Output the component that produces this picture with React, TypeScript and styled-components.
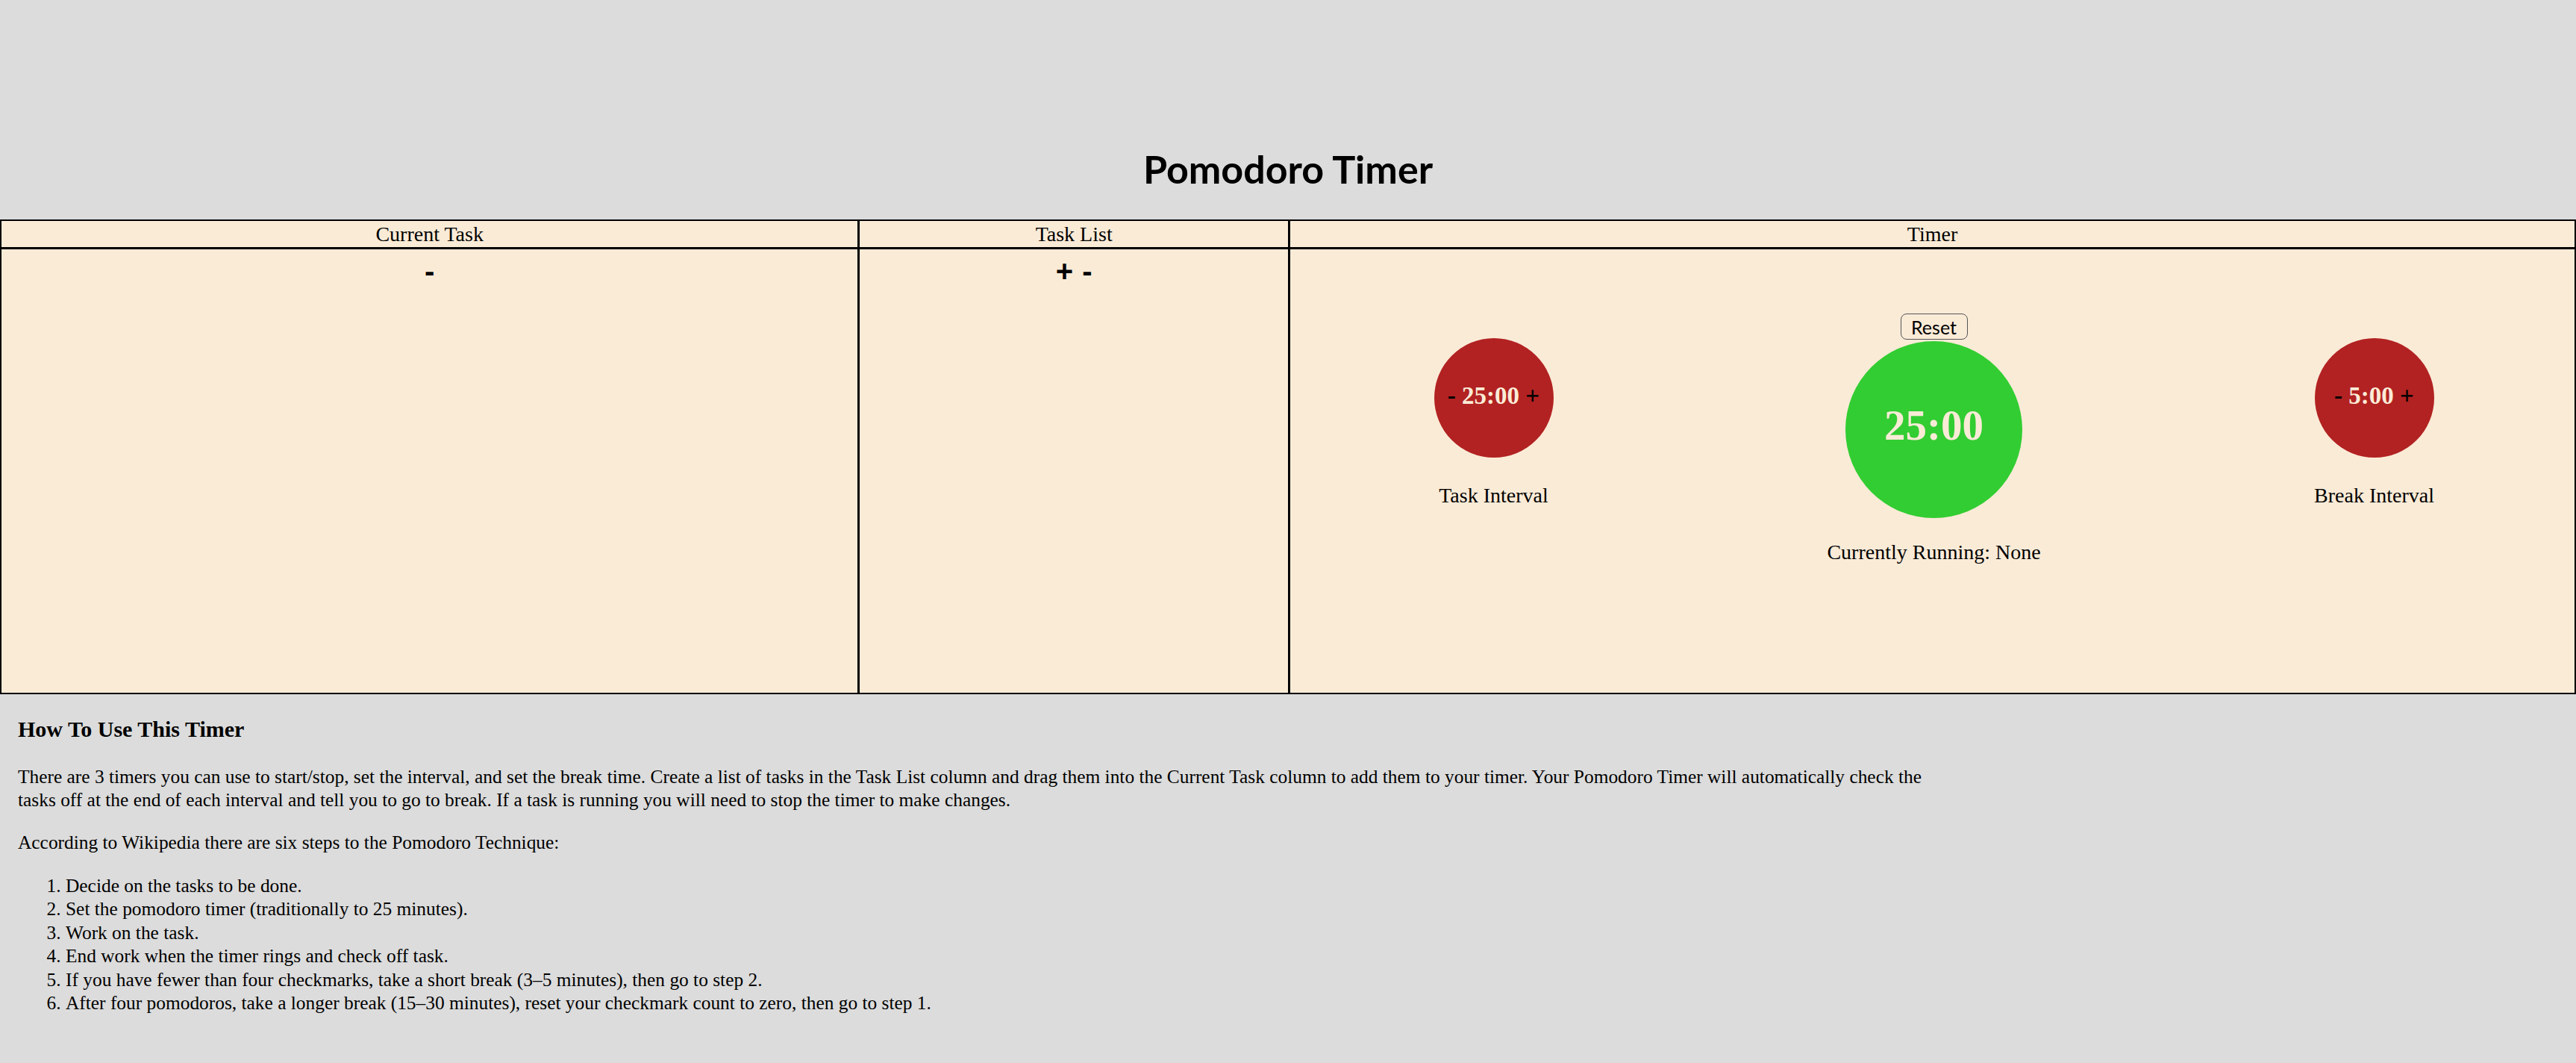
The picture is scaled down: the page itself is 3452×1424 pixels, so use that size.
import React from "react";
import styled, { createGlobalStyle } from "styled-components";

const GlobalStyle = createGlobalStyle`
  html, body {
    margin: 0;
    padding: 0;
    background: #dcdcdc;
    min-height: 100%;
  }
  body {
    font-family: "Liberation Serif", "Times New Roman", serif;
    color: #000;
  }
`;

const Page = styled.div`
  min-height: 1424px;
  background: #dcdcdc;
`;

const Header = styled.header`
  padding: 195px 0 37px;
  text-align: center;
`;

const Title = styled.h1`
  margin: 0;
  font-family: "Lato", "DejaVu Sans", sans-serif;
  font-weight: 700;
  font-size: 52px;
  line-height: 1.2;
  color: #000;
`;

const Board = styled.div`
  display: grid;
  grid-template-columns: 2fr 1fr 3fr;
  grid-template-rows: 35px 594px;
  column-gap: 3px;
  row-gap: 3px;
  background: #000;
  border: 2px solid #000;
`;

const HeadCell = styled.div`
  background: #faebd7;
  text-align: center;
  font-size: 28px;
  line-height: 35px;
`;

const BodyCell = styled.div`
  background: #faebd7;
  text-align: center;
`;

const Controls = styled.div`
  padding-top: 6px;
  font-family: "Liberation Sans", Arial, sans-serif;
  font-weight: 700;
  font-size: 40px;
  line-height: 46px;
  display: flex;
  justify-content: center;
  gap: 12px;
`;

const TimerRow = styled.div`
  display: flex;
  justify-content: center;
  align-items: flex-start;
  gap: 360px;
  padding-left: 4px;
`;

const TimerCol = styled.div<{ $offset: number; $width: number }>`
  width: ${(p) => p.$width}px;
  padding-top: ${(p) => p.$offset}px;
  display: flex;
  flex-direction: column;
  align-items: center;
  flex-shrink: 0;
`;

const Circle = styled.div<{ $size: number; $color: string }>`
  width: ${(p) => p.$size}px;
  height: ${(p) => p.$size}px;
  border-radius: 50%;
  background: ${(p) => p.$color};
  display: flex;
  align-items: center;
  justify-content: center;
  font-weight: 700;
  white-space: nowrap;
`;

const SmallClock = styled.div`
  font-size: 33px;
  padding-bottom: 5px;
`;

const BigClock = styled.div`
  font-size: 57px;
  color: #faebd7;
  padding-bottom: 12px;
`;

const Adjust = styled.span`
  color: #000;
`;

const Time = styled.span`
  color: #faebd7;
`;

const Label = styled.div<{ $gap: number }>`
  margin-top: ${(p) => p.$gap}px;
  font-size: 28px;
  line-height: 32px;
  white-space: nowrap;
`;

const ResetButton = styled.button`
  width: 90px;
  height: 35px;
  margin-bottom: 2px;
  padding: 0;
  font-family: "Lato", "DejaVu Sans", sans-serif;
  font-size: 25px;
  color: #000;
  background: transparent;
  border: 1.5px solid #555;
  border-radius: 8px;
`;

const Instructions = styled.section`
  max-width: 75%;
  padding: 0 0 40px 24px;
  font-size: 25.4px;
  line-height: 31.5px;
`;

const HowTitle = styled.h3`
  margin: 30px 0;
  font-size: 30px;
  line-height: 34.5px;
  font-weight: 700;
`;

const Para = styled.p`
  margin: 25.6px 0;
`;

const Steps = styled.ol`
  margin: 25.6px 0;
  padding-left: 64px;
`;

export default function App() {
  return (
    <>
      <GlobalStyle />
      <Page>
        <Header>
          <Title>Pomodoro Timer</Title>
        </Header>
        <Board>
          <HeadCell>Current Task</HeadCell>
          <HeadCell>Task List</HeadCell>
          <HeadCell>Timer</HeadCell>
          <BodyCell>
            <Controls>
              <span>-</span>
            </Controls>
          </BodyCell>
          <BodyCell>
            <Controls>
              <span>+</span>
              <span>-</span>
            </Controls>
          </BodyCell>
          <BodyCell>
            <TimerRow>
              <TimerCol $offset={119} $width={160}>
                <Circle $size={160} $color="#b22222">
                  <SmallClock>
                    <Adjust>-</Adjust> <Time>25:00</Time> <Adjust>+</Adjust>
                  </SmallClock>
                </Circle>
                <Label $gap={35}>Task Interval</Label>
              </TimerCol>
              <TimerCol $offset={86} $width={300}>
                <ResetButton>Reset</ResetButton>
                <Circle $size={237} $color="#32cd32">
                  <BigClock>25:00</BigClock>
                </Circle>
                <Label $gap={30}>Currently Running: None</Label>
              </TimerCol>
              <TimerCol $offset={119} $width={160}>
                <Circle $size={160} $color="#b22222">
                  <SmallClock>
                    <Adjust>-</Adjust> <Time>5:00</Time> <Adjust>+</Adjust>
                  </SmallClock>
                </Circle>
                <Label $gap={35}>Break Interval</Label>
              </TimerCol>
            </TimerRow>
          </BodyCell>
        </Board>
        <Instructions>
          <HowTitle>How To Use This Timer</HowTitle>
          <Para>
            There are 3 timers you can use to start/stop, set the interval, and set the break time. Create a list of
            tasks in the Task List column and drag them into the Current Task column to add them to your timer. Your
            Pomodoro Timer will automatically check the tasks off at the end of each interval and tell you to go to
            break. If a task is running you will need to stop the timer to make changes.
          </Para>
          <Para>According to Wikipedia there are six steps to the Pomodoro Technique:</Para>
          <Steps>
            <li>Decide on the tasks to be done.</li>
            <li>Set the pomodoro timer (traditionally to 25 minutes).</li>
            <li>Work on the task.</li>
            <li>End work when the timer rings and check off task.</li>
            <li>If you have fewer than four checkmarks, take a short break (3–5 minutes), then go to step 2.</li>
            <li>After four pomodoros, take a longer break (15–30 minutes), reset your checkmark count to zero, then go to step 1.</li>
          </Steps>
        </Instructions>
      </Page>
    </>
  );
}
